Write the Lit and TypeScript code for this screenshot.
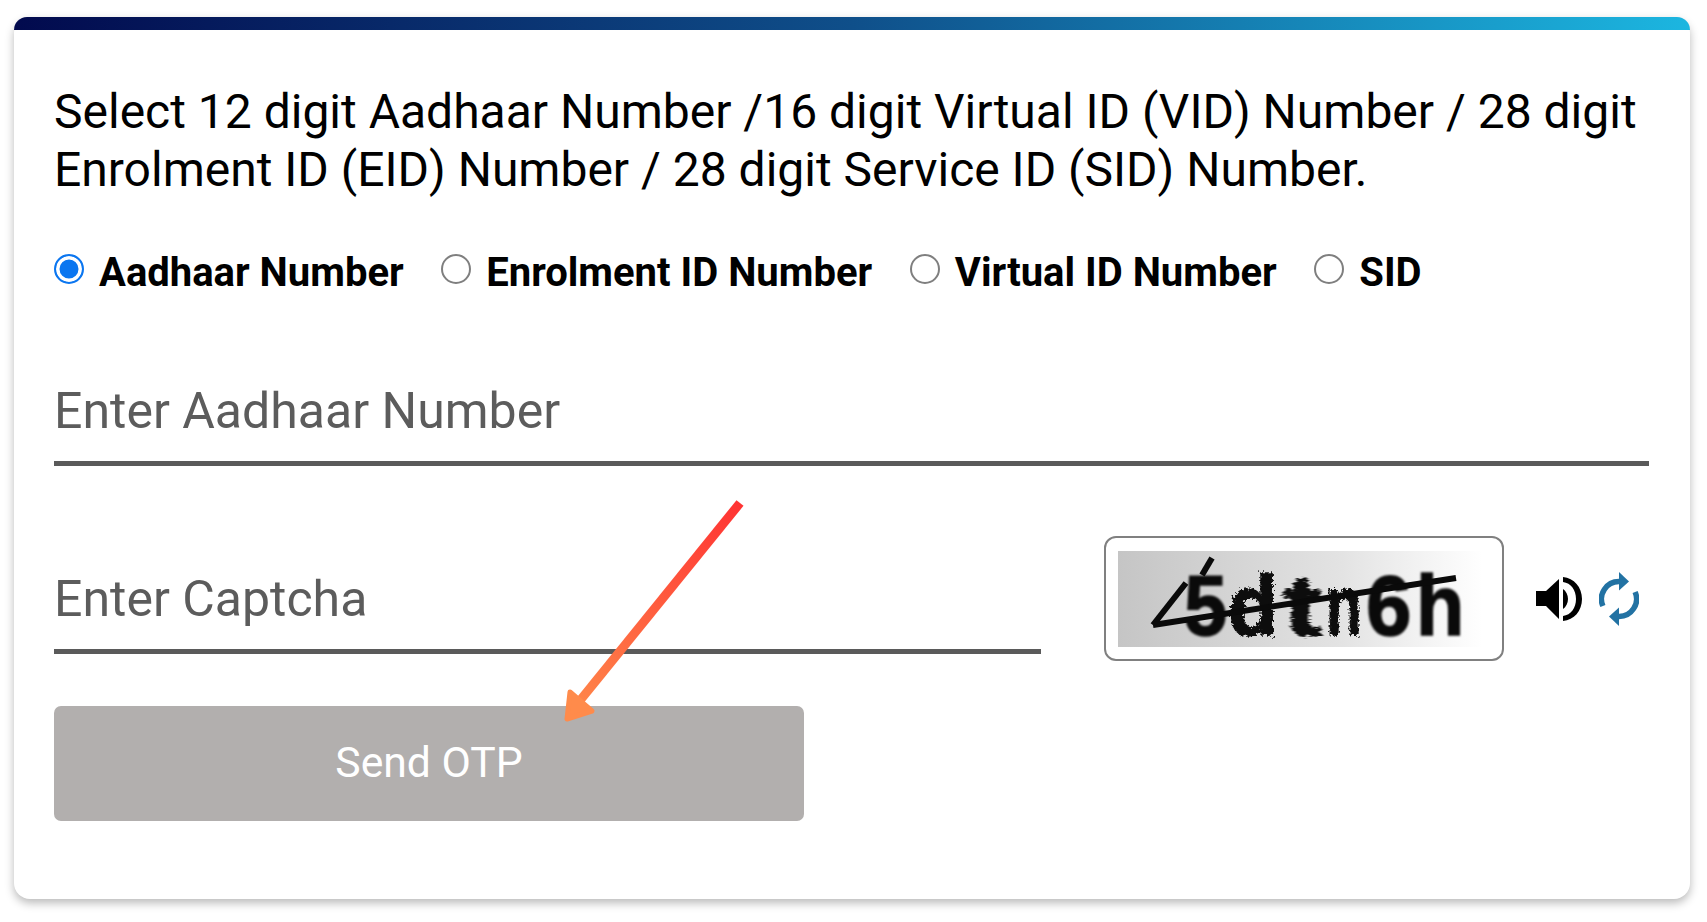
import { LitElement, html, css } from "lit";
import { customElement } from "lit/decorators.js";

const OPTIONS = [
  { label: "Aadhaar Number", checked: true },
  { label: "Enrolment ID Number", checked: false },
  { label: "Virtual ID Number", checked: false },
  { label: "SID", checked: false },
];

const CAPTCHA = [
  { c: "5", w: 44, s: 0.9, rough: false },
  { c: "d", w: 55, s: 0.95, rough: true },
  { c: "t", w: 43, s: 1.35, rough: true },
  { c: "n", w: 40, s: 0.68, rough: true },
  { c: "6", w: 50, s: 0.95, rough: false },
  { c: "h", w: 50, s: 0.92, rough: false },
];

@customElement("app-root")
export class AppRoot extends LitElement {
  static styles = css`
    :host { display: block; width: 1707px; height: 922px; background: #fff; overflow: hidden;
      font-family: Roboto, "Liberation Sans", sans-serif; color: #000; }
    .page { padding: 17px 0 0 14px; }
    .card { position: relative; width: 1676px; height: 882px; background: #fff; border-radius: 16px;
      box-shadow: 0 4px 10px rgba(0,0,0,.28); }
    .bar { height: 13px; border-radius: 16px 16px 0 0;
      background: linear-gradient(90deg, #020a4e 0%, #0f4f8a 50%, #1cb6e0 100%); }
    .body { padding: 53px 41px 0 40px; }
    .intro { margin: 0; font-size: 48px; line-height: 58px; font-weight: 400; white-space: nowrap; }
    .radios { display: flex; margin-top: 51px; height: 44px; }
    .opt { display: flex; align-items: flex-start; gap: 15px; margin-right: 37.6px;
      font-size: 40px; line-height: 46px; font-weight: 700; }
    .opt input { appearance: none; margin: 4px 0 0; width: 30px; height: 30px; border-radius: 50%;
      border: 2.5px solid #7f7f7f; background: #fff; box-sizing: border-box; }
    .opt input:checked { border-color: #0b76f0; background: #0b76f0; box-shadow: inset 0 0 0 3.5px #fff; }
    .field { height: 84px; box-sizing: border-box; border-bottom: 5px solid #5a5a5a;
      font-size: 50px; line-height: 59px; color: #5c5c5c; }
    .aadhaar { margin-top: 88px; }
    .captcha-row { display: flex; align-items: flex-end; margin-top: 70px; height: 125px; }
    .captcha-row .field { width: 987px; flex: none; margin-bottom: 7px; }
    .captcha { flex: none; width: 400px; height: 125px; margin-left: 63px; box-sizing: border-box;
      padding: 13px 12px; border: 2px solid #808080; border-radius: 12px; background: #fff; }
    .img { position: relative; display: flex; align-items: center; height: 96px; padding-left: 66px; box-sizing: border-box;
      background: linear-gradient(90deg, #c5c5c5 0%, #e3e3e3 60%, #fff 98%);
      font-family: "Liberation Sans", sans-serif; font-weight: 700; font-size: 86px; line-height: 96px; color: #0a0a0a; }
    .img span { display: block; flex: none; transform-origin: left center; -webkit-text-stroke: 1.5px #0a0a0a; filter: blur(1px); }
    .img span.rough { filter: url(#rough); }
    .img svg { position: absolute; left: 0; top: 0; }
    .lines { filter: blur(.7px); }
    .icons { flex: none; align-self: center; display: flex; align-items: center; margin-left: 32px; gap: 17px; }
    .icons svg { display: block; }
    .send { display: flex; align-items: center; justify-content: center; margin-top: 45px; width: 750px; height: 115px;
      padding-bottom: 3px; box-sizing: border-box;
      background: #b2afae; border-radius: 7px; color: #fff; font-size: 42.7px; }
    .arrow { position: absolute; left: 546px; top: 478px; }
  `;

  render() {
    return html`
      <div class="page">
        <div class="card">
          <div class="bar"></div>
          <div class="body">
            <p class="intro">Select 12 digit Aadhaar Number /16 digit Virtual ID (VID) Number / 28 digit<br />Enrolment ID (EID) Number / 28 digit Service ID (SID) Number.</p>
            <div class="radios">
              ${OPTIONS.map(o => html`<label class="opt"><input type="radio" name="id" ?checked=${o.checked} /><span>${o.label}</span></label>`)}
            </div>
            <div class="field aadhaar">Enter Aadhaar Number</div>
            <div class="captcha-row">
              <div class="field">Enter Captcha</div>
              <div class="captcha">
                <div class="img">
                  <svg width="0" height="0">
                    <filter id="rough" x="-20%" y="-20%" width="140%" height="140%">
                      <feTurbulence type="fractalNoise" baseFrequency="0.35" numOctaves="2" seed="4" />
                      <feDisplacementMap in="SourceGraphic" scale="9" />
                      <feGaussianBlur stdDeviation=".6" />
                    </filter>
                  </svg>
                  ${CAPTCHA.map(l => html`<span class=${l.rough ? "rough" : ""} style="width:${l.w}px;transform:translateY(6px) scaleX(${l.s})">${l.c}</span>`)}
                  <svg class="lines" width="372" height="96" viewBox="0 0 372 96" fill="none" stroke="#0a0a0a" stroke-width="6">
                    <path d="M35 74 L68 32" />
                    <path d="M35 74 L338 27" />
                    <path d="M84 24 L94 7" />
                  </svg>
                </div>
              </div>
              <div class="icons">
                <svg width="46" height="44" viewBox="0 0 46 44" fill="#000">
                  <path d="M0 14H10L23 2V42L10 29H0Z" />
                  <path d="M27 12C30 14 32 18 32 22S30 30 27 32Z" />
                  <path d="M27 0C38 1 46 10 46 22S38 43 27 44V39C35 38 40 31 40 22S35 6 27 5Z" />
                </svg>
                <svg width="40" height="54" viewBox="0 0 40 54" fill="#2272a3">
                  <path d="M3.9 34A17.5 17.5 0 0 1 20 9.5" fill="none" stroke="#2272a3" stroke-width="5.5" />
                  <path d="M20 0L30 9.5L20 18.5Z" />
                  <path d="M36.1 20A17.5 17.5 0 0 1 20 44.5" fill="none" stroke="#2272a3" stroke-width="5.5" />
                  <path d="M20 35.5L10 44.5L20 54Z" />
                </svg>
              </div>
            </div>
            <div class="send">Send OTP</div>
          </div>
          <svg class="arrow" width="185" height="235" viewBox="0 0 185 235" fill="none">
            <defs>
              <linearGradient id="ag" gradientUnits="userSpaceOnUse" x1="180" y1="8" x2="5" y2="226">
                <stop offset="0" stop-color="#ff3333" />
                <stop offset="1" stop-color="#ff8b4b" />
              </linearGradient>
            </defs>
            <path d="M180 8L18 208" stroke="url(#ag)" stroke-width="9" />
            <path d="M7 224L10 197L32 216Z" fill="#ff8b4b" stroke="#ff8b4b" stroke-width="5" stroke-linejoin="round" />
          </svg>
        </div>
      </div>
    `;
  }
}
